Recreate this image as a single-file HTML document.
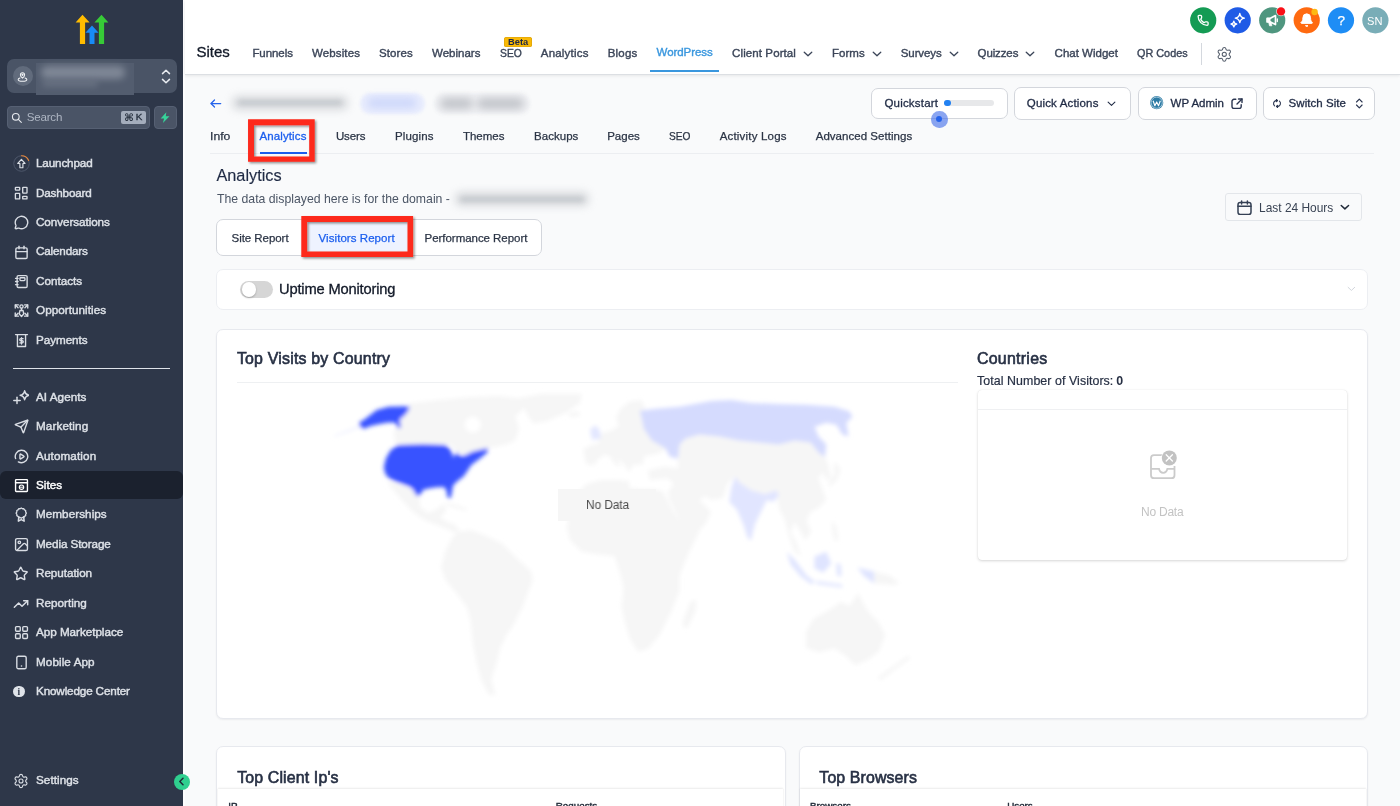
<!DOCTYPE html>
<html lang="en">
<head>
<meta charset="utf-8">
<title>Sites - WordPress Analytics</title>
<style>
*{box-sizing:border-box;margin:0;padding:0}
html,body{width:1400px;height:806px;overflow:hidden;background:#f9fafb;font-family:"Liberation Sans",sans-serif;}
.t{position:absolute;white-space:pre;}
.abs{position:absolute;}
#sidebar{position:absolute;left:0;top:0;width:183px;height:806px;background:#2e3749;}
#sidebar svg.ic{position:absolute;left:13.8px;width:15px;height:15px;fill:none;stroke:#d9dde4;stroke-width:2.2;stroke-linecap:round;stroke-linejoin:round;}
#header{position:absolute;left:185px;top:0;width:1215px;height:74.5px;background:#fff;border-bottom:1px solid #dcdfe3;box-shadow:0 1px 3px rgba(0,0,0,.08);}
.chev{position:absolute;fill:none;stroke:#3b4558;stroke-width:2.6;stroke-linecap:round;stroke-linejoin:round;}
.circ{position:absolute;top:7.2px;width:26.4px;height:26.4px;border-radius:50%;}
.circ svg{position:absolute;left:6.2px;top:6.2px;width:14px;height:14px;}
.btn{position:absolute;background:#fff;border:1px solid #d3d6dc;border-radius:7px;}
.card{position:absolute;background:#fff;border:1px solid #e7e9ee;border-radius:7px;box-shadow:0 1px 2px rgba(16,24,40,.06);}
.redbox{position:absolute;border:6px solid #f5261b;box-shadow:2px 2px 3px rgba(0,0,0,.35);}
</style>
</head>
<body>
<div id="page" style="position:absolute;left:0;top:0;width:1400px;height:806px;overflow:hidden;will-change:transform;">
<!-- ============ SIDEBAR ============ -->
<div id="sidebar">
<!-- logo -->
<svg class="abs" style="left:75px;top:14px;width:34px;height:31px" viewBox="0 0 34 31">
  <polygon points="7.5,0.8 14.6,8.4 10.1,8.4 10.1,30 4.9,30 4.9,8.4 0.6,8.4" fill="#ffbc00"/>
  <polygon points="17,11.6 23.6,18.8 19.5,18.8 19.5,30 14.5,30 14.5,18.8 10.4,18.8" fill="#188bf6"/>
  <polygon points="26.5,0.8 33.4,8.4 29.1,8.4 29.1,30 23.9,30 23.9,8.4 19.4,8.4" fill="#37ca37"/>
</svg>
<!-- account switcher -->
<div class="abs" style="left:6.6px;top:59px;width:170.4px;height:34px;border-radius:7px;background:#4a5466;"></div>
<div class="abs" style="left:12.6px;top:65.8px;width:20.6px;height:20.6px;border-radius:50%;background:#616b7c;"></div>
<svg class="abs" style="left:17.4px;top:70.6px;width:11px;height:11px;fill:none;stroke:#f1f3f6;stroke-width:2.2;stroke-linecap:round;stroke-linejoin:round" viewBox="0 0 24 24"><path d="M12 15.5c-2.6-2.3-4.6-4.6-4.600-7a4.600 4.600 0 0 1 9.200 0c0 2.400-2 4.700-4.600 7z"/><circle cx="12" cy="8.300" r="1.400"/><path d="M6.500 15.200C4 16 2.500 17.200 2.500 18.500 2.500 20.700 6.800 22.500 12 22.500s9.500-1.800 9.500-4c0-1.300-1.500-2.500-4-3.300"/></svg>
<!-- blurred account name -->
<div class="abs" style="left:36px;top:63px;width:98px;height:31.500px;background:#535d6f;filter:blur(.6px)"></div>
<div class="abs" style="left:41px;top:66px;width:84px;height:13px;border-radius:6px;background:#8a92a0;filter:blur(3.500px);opacity:.8"></div>
<div class="abs" style="left:42px;top:80px;width:56px;height:7px;border-radius:4px;background:#6d7686;filter:blur(3px);opacity:.8"></div>
<svg class="abs" style="left:160.5px;top:67.5px;width:10px;height:17px;fill:none;stroke:#e8ebf0;stroke-width:1.5;stroke-linecap:round;stroke-linejoin:round" viewBox="0 0 10 17"><path d="M1.500 5.600 5 2.200l3.500 3.400"/><path d="M1.500 11.400 5 14.800l3.500-3.400"/></svg>
<!-- search -->
<div class="abs" style="left:6.6px;top:106px;width:143px;height:23px;border-radius:4px;background:#4a5466;border:1px solid #566073;"></div>
<svg class="abs" style="left:10.800px;top:111.600px;width:11.500px;height:11.500px;fill:none;stroke:#e6e9ee;stroke-width:2.300;stroke-linecap:round" viewBox="0 0 24 24"><circle cx="10" cy="10" r="7"/><path d="m21.500 21.500-6.200-6.200"/></svg>
<span class="t" style="left:26.79px;top:109.00px;font-size:11.6px;line-height:15px;font-weight:400;color:#aeb6c3;letter-spacing:-0.224px;">Search</span>
<div class="abs" style="left:121px;top:111px;width:24.5px;height:13px;border-radius:2px;background:#a4adbc;"></div>
<span class="t" style="left:124.14px;top:111.00px;font-size:10.3px;line-height:13px;font-weight:700;color:#1f2937;letter-spacing:0.000px;font-family:'DejaVu Sans',sans-serif;">⌘</span>
<span class="t" style="left:135.80px;top:110.00px;font-size:9.8px;line-height:13px;font-weight:400;color:#1f2937;letter-spacing:0.000px;-webkit-text-stroke:.3px;">K</span>
<div class="abs" style="left:154px;top:106px;width:23px;height:23px;border-radius:4px;background:#4a5466;border:1px solid #566073;"></div>
<svg class="abs" style="left:160.400px;top:112.200px;width:10.200px;height:11.200px" viewBox="0 0 19 21"><path d="M11.800.4 1.200 12.200h6.400L5.400 20.600 17.800 8.200h-7z" fill="#36d399"/></svg>

<!-- nav items group 1 -->
<svg class="abs" style="left:12.6px;top:154.9px;width:17px;height:17px" viewBox="0 0 34 34"><circle cx="17" cy="17" r="15.500" fill="none" stroke="#566073" stroke-width="1.600"/><path d="M17 1.500a15.500 15.500 0 0 1 14.300 9.500" fill="none" stroke="#e9873a" stroke-width="2.200" stroke-linecap="round"/><path d="M16.800 8.600 24.100 17H19.800V25.400H13.800V17H9.500Z" fill="none" stroke="#dde1e7" stroke-width="2.300" stroke-linejoin="round"/></svg>
<span class="t" style="left:35.99px;top:155.00px;font-size:11.7px;line-height:15px;font-weight:400;color:#dde1e7;letter-spacing:-0.143px;-webkit-text-stroke:.42px;">Launchpad</span>
<svg class="ic" style="top:185.800px;left:14px;width:14.500px;height:14.500px;stroke-width:1.350" viewBox="0 0 14.500 14.500"><rect x="1.400" y="1.300" width="4.300" height="2.800" rx=".5"/><rect x="1.400" y="7.300" width="4.300" height="5.600" rx=".5"/><rect x="8.700" y="1.300" width="4.300" height="5.800" rx=".5"/><rect x="8.700" y="10.300" width="4.300" height="2.600" rx=".5"/></svg>
<span class="t" style="left:35.99px;top:185.00px;font-size:11.7px;line-height:15px;font-weight:400;color:#dde1e7;letter-spacing:-0.171px;-webkit-text-stroke:.42px;">Dashboard</span>
<svg class="ic" style="top:215.1px" viewBox="0 0 24 24"><path d="M2.992 16.342a2 2 0 0 1 .094 1.167l-1.065 3.290a1 1 0 0 0 1.236 1.168l3.413-.998a2 2 0 0 1 1.099.092 10 10 0 1 0-4.777-4.719"/></svg>
<span class="t" style="left:35.99px;top:214.00px;font-size:11.7px;line-height:15px;font-weight:400;color:#dde1e7;letter-spacing:-0.067px;-webkit-text-stroke:.42px;">Conversations</span>
<svg class="ic" style="top:244.5px" viewBox="0 0 24 24"><path d="M8 2v4"/><path d="M16 2v4"/><rect width="18" height="17" x="3" y="4.500" rx="2"/><path d="M3 10.500h18"/></svg>
<span class="t" style="left:35.99px;top:243.00px;font-size:11.7px;line-height:15px;font-weight:400;color:#dde1e7;letter-spacing:-0.170px;-webkit-text-stroke:.42px;">Calendars</span>
<svg class="ic" style="top:274px" viewBox="0 0 24 24"><rect width="16" height="19" x="5" y="2.500" rx="2"/><path d="M2.500 7h4"/><path d="M2.500 12h4"/><path d="M2.500 17h4"/><rect x="9.500" y="6" width="8" height="4.500" rx="1.200"/></svg>
<span class="t" style="left:35.99px;top:273.00px;font-size:11.7px;line-height:15px;font-weight:400;color:#dde1e7;letter-spacing:0.013px;-webkit-text-stroke:.42px;">Contacts</span>
<svg class="ic" style="top:303.4px" viewBox="0 0 24 24"><circle cx="12" cy="5.500" r="2.600"/><path d="M12 8.500v3.500"/><path d="M9.500 12h5l1 5.500-3.500 4-3.500-4z"/><path d="M2 8V3h5"/><path d="m2.300 3.300 4.200 4.200"/><path d="M22 8V3h-5"/><path d="m21.700 3.300-4.200 4.200"/><path d="M2 16v5h5"/><path d="m2.300 20.700 4.200-4.200"/><path d="M22 16v5h-5"/><path d="m21.700 20.700-4.200-4.200"/></svg>
<span class="t" style="left:35.99px;top:302.00px;font-size:11.7px;line-height:15px;font-weight:400;color:#dde1e7;letter-spacing:0.050px;-webkit-text-stroke:.42px;">Opportunities</span>
<svg class="ic" style="top:332.9px" viewBox="0 0 24 24"><path d="M2.500 2.500h19"/><path d="M5.500 2.500v19h13v-19"/><path d="M14.500 9h-3.600a1.700 1.700 0 0 0 0 3.400h2.200a1.700 1.700 0 0 1 0 3.400H9.500"/><path d="M12 7.500v10"/></svg>
<span class="t" style="left:35.99px;top:332.00px;font-size:11.7px;line-height:15px;font-weight:400;color:#dde1e7;letter-spacing:-0.050px;-webkit-text-stroke:.42px;">Payments</span>
<div class="abs" style="left:13.4px;top:367.6px;width:156.8px;height:1.3px;background:#dfe3e9;"></div>

<!-- nav items group 2 -->
<svg class="ic" style="top:389.6px;left:13px;width:16px;height:16px" viewBox="0 0 24 24"><path d="M17.400 1.200c.8 4.200 2.500 5.900 6.700 6.700-4.200.8-5.900 2.500-6.700 6.700-.8-4.200-2.500-5.900-6.700-6.700 4.200-.8 5.900-2.500 6.700-6.700z"/><path d="M6 10.800v9.600"/><path d="M1.200 15.600h9.600"/></svg>
<span class="t" style="left:35.99px;top:389.00px;font-size:11.7px;line-height:15px;font-weight:400;color:#dde1e7;letter-spacing:0.048px;-webkit-text-stroke:.42px;">AI Agents</span>
<svg class="ic" style="top:419.1px" viewBox="0 0 24 24"><path d="M14.536 21.686a.5.5 0 0 0 .937-.024l6.500-19a.496.496 0 0 0-.635-.635l-19 6.500a.5.5 0 0 0-.024.937l7.930 3.180a2 2 0 0 1 1.112 1.110z"/><path d="m21.854 2.147-10.940 10.939"/></svg>
<span class="t" style="left:35.99px;top:418.00px;font-size:11.7px;line-height:15px;font-weight:400;color:#dde1e7;letter-spacing:0.111px;-webkit-text-stroke:.42px;">Marketing</span>
<svg class="ic" style="top:448.5px" viewBox="0 0 24 24"><path d="M2.600 15.400A10 10 0 1 1 7 20.660"/><path d="M9.500 8.800a.8.800 0 0 1 1.200-.7l5 3.200a.8.800 0 0 1 0 1.400l-5 3.200a.8.800 0 0 1-1.200-.7z"/></svg>
<span class="t" style="left:35.99px;top:448.00px;font-size:11.7px;line-height:15px;font-weight:400;color:#dde1e7;letter-spacing:0.122px;-webkit-text-stroke:.42px;">Automation</span>
<div class="abs" style="left:0;top:470.6px;width:183px;height:28.8px;background:#1b212e;border-radius:6px;"></div>
<svg class="ic" style="top:478px;stroke:#fff" viewBox="0 0 24 24"><rect x="2.500" y="2.500" width="19" height="19" rx="1"/><path d="M2.500 7.500h19" stroke-width="2.400"/><circle cx="12" cy="14.700" r="3.500" stroke-width="1.800"/><path d="M8.500 14.700h7" stroke-width="1.500"/></svg>
<span class="t" style="left:35.99px;top:477.00px;font-size:11.7px;line-height:15px;font-weight:400;color:#ffffff;letter-spacing:0.009px;-webkit-text-stroke:.42px;">Sites</span>
<svg class="ic" style="top:506.2px;left:13.2px;width:16.5px;height:16.5px" viewBox="0 0 24 24"><path d="M8.500 15.500 7.800 22l4.200-2.200 4.200 2.200-.7-6.500"/><path d="M12 2.200l2 1.300 2.400-.1 1.100 2.100 2.100 1.100-.1 2.400 1.300 2-1.300 2 .1 2.400-2.100 1.100-1.100 2.100-2.400-.1-2 1.300-2-1.300-2.400.1-1.100-2.100-2.100-1.100.1-2.400-1.300-2 1.300-2-.1-2.400 2.100-1.100 1.100-2.100 2.400.1z" transform="translate(1.800 1) scale(.85)"/></svg>
<span class="t" style="left:35.99px;top:506.00px;font-size:11.7px;line-height:15px;font-weight:400;color:#dde1e7;letter-spacing:0.056px;-webkit-text-stroke:.42px;">Memberships</span>
<svg class="ic" style="top:536.9px" viewBox="0 0 24 24"><rect width="19" height="19" x="2.500" y="2.500" rx="2.500"/><circle cx="8.500" cy="8.500" r="2"/><path d="m21.500 14.500-3.586-3.586a2 2 0 0 0-2.828 0L5 21"/></svg>
<span class="t" style="left:35.99px;top:536.00px;font-size:11.7px;line-height:15px;font-weight:400;color:#dde1e7;letter-spacing:-0.100px;-webkit-text-stroke:.42px;">Media Storage</span>
<svg class="ic" style="top:566.3px;left:13.4px;width:15.500px;height:15.500px" viewBox="0 0 24 24"><path d="M11.525 2.295a.53.53 0 0 1 .95 0l2.310 4.679a2.123 2.123 0 0 0 1.595 1.160l5.166.756a.53.53 0 0 1 .294.904l-3.736 3.638a2.123 2.123 0 0 0-.611 1.878l.882 5.140a.53.53 0 0 1-.771.560l-4.618-2.428a2.122 2.122 0 0 0-1.973 0L6.396 21.010a.53.53 0 0 1-.770-.560l.881-5.139a2.122 2.122 0 0 0-.611-1.879L2.160 9.795a.53.53 0 0 1 .294-.906l5.165-.755a2.122 2.122 0 0 0 1.597-1.160z"/></svg>
<span class="t" style="left:35.99px;top:565.00px;font-size:11.7px;line-height:15px;font-weight:400;color:#dde1e7;letter-spacing:-0.048px;-webkit-text-stroke:.42px;">Reputation</span>
<svg class="ic" style="top:595.8px;left:13px;width:16px;height:16px" viewBox="0 0 24 24"><path d="M16 7h6v6"/><path d="m22 7-8.500 8.500-5-5L2 17"/></svg>
<span class="t" style="left:35.99px;top:595.00px;font-size:11.7px;line-height:15px;font-weight:400;color:#dde1e7;letter-spacing:0.016px;-webkit-text-stroke:.42px;">Reporting</span>
<svg class="ic" style="top:625.3px" viewBox="0 0 24 24"><rect width="7.500" height="7.500" x="2.500" y="2.500" rx="1.500"/><rect width="7.500" height="7.500" x="14" y="2.500" rx="1.500"/><rect width="7.500" height="7.500" x="14" y="14" rx="1.500"/><rect width="7.500" height="7.500" x="2.500" y="14" rx="1.500"/></svg>
<span class="t" style="left:35.99px;top:624.00px;font-size:11.7px;line-height:15px;font-weight:400;color:#dde1e7;letter-spacing:-0.035px;-webkit-text-stroke:.42px;">App Marketplace</span>
<svg class="ic" style="top:654.7px" viewBox="0 0 24 24"><rect width="15" height="20" x="4.500" y="2" rx="2.500"/><path d="M12 17.500h.01" stroke-width="2.600"/></svg>
<span class="t" style="left:35.99px;top:654.00px;font-size:11.7px;line-height:15px;font-weight:400;color:#dde1e7;letter-spacing:0.088px;-webkit-text-stroke:.42px;">Mobile App</span>
<div class="abs" style="left:13px;top:685.6px;width:11.800px;height:11.800px;border-radius:50%;background:#dfe3e9;"></div>
<span class="t" style="left:17.60px;top:686.00px;font-size:9.5px;line-height:12px;font-weight:700;color:#2e3749;letter-spacing:0.000px;font-family:'Liberation Serif',serif;">i</span>
<span class="t" style="left:35.99px;top:683.00px;font-size:11.7px;line-height:15px;font-weight:400;color:#dde1e7;letter-spacing:-0.144px;-webkit-text-stroke:.42px;">Knowledge Center</span>
<svg class="ic" style="top:772.700px;left:13px;width:16px;height:16px;stroke-width:1.700" viewBox="0 0 24 24"><path d="M9.671 4.136a2.340 2.340 0 0 1 4.659 0 2.340 2.340 0 0 0 3.319 1.915 2.340 2.340 0 0 1 2.330 4.033 2.340 2.340 0 0 0 0 3.831 2.340 2.340 0 0 1-2.330 4.033 2.340 2.340 0 0 0-3.319 1.915 2.340 2.340 0 0 1-4.659 0 2.340 2.340 0 0 0-3.320-1.915 2.340 2.340 0 0 1-2.330-4.033 2.340 2.340 0 0 0 0-3.831A2.340 2.340 0 0 1 6.350 6.051a2.340 2.340 0 0 0 3.319-1.915"/><circle cx="12" cy="12" r="3"/></svg>
<span class="t" style="left:35.99px;top:772.00px;font-size:11.7px;line-height:15px;font-weight:400;color:#dde1e7;letter-spacing:0.055px;-webkit-text-stroke:.42px;">Settings</span>

</div>
<div class="abs" style="left:183px;top:0;width:2px;height:806px;background:#fdfdfe;z-index:0"></div>
<!-- ============ HEADER ============ -->
<div id="header"></div>
<span class="t" style="left:196.47px;top:42.00px;font-size:15.0px;line-height:20px;font-weight:400;color:#111827;letter-spacing:-0.002px;-webkit-text-stroke:.3px;">Sites</span>
<span class="t" style="left:252.40px;top:46.00px;font-size:11.5px;line-height:15px;font-weight:400;color:#3b4558;letter-spacing:-0.069px;-webkit-text-stroke:.38px;">Funnels</span>
<span class="t" style="left:312.10px;top:46.00px;font-size:11.5px;line-height:15px;font-weight:400;color:#3b4558;letter-spacing:0.102px;-webkit-text-stroke:.38px;">Websites</span>
<span class="t" style="left:379.10px;top:46.00px;font-size:11.5px;line-height:15px;font-weight:400;color:#3b4558;letter-spacing:0.071px;-webkit-text-stroke:.38px;">Stores</span>
<span class="t" style="left:432.10px;top:46.00px;font-size:11.5px;line-height:15px;font-weight:400;color:#3b4558;letter-spacing:-0.010px;-webkit-text-stroke:.38px;">Webinars</span>
<div class="abs" style="left:504px;top:37px;width:28px;height:10.300px;border-radius:2.500px;background:#f9b906;box-shadow:inset 0 0 0 .6px #d9a00a"></div>
<span class="t" style="left:507.96px;top:35.00px;font-size:9.8px;line-height:13px;font-weight:700;color:#1d2748;letter-spacing:0.000px;transform:scaleX(0.9499);transform-origin:0 50%;">Beta</span>
<span class="t" style="left:499.60px;top:46.00px;font-size:11.5px;line-height:15px;font-weight:400;color:#3b4558;letter-spacing:0.000px;-webkit-text-stroke:.38px;transform:scaleX(0.8974);transform-origin:0 50%;">SEO</span>
<span class="t" style="left:540.80px;top:46.00px;font-size:11.5px;line-height:15px;font-weight:400;color:#3b4558;letter-spacing:0.197px;-webkit-text-stroke:.38px;">Analytics</span>
<span class="t" style="left:607.80px;top:46.00px;font-size:11.5px;line-height:15px;font-weight:400;color:#3b4558;letter-spacing:0.156px;-webkit-text-stroke:.38px;">Blogs</span>
<span class="t" style="left:656.60px;top:45.00px;font-size:11.5px;line-height:15px;font-weight:400;color:#3a97de;letter-spacing:-0.071px;-webkit-text-stroke:.38px;">WordPress</span>
<div class="abs" style="left:650px;top:69.8px;width:69.300px;height:2px;background:#3a97de;"></div>
<span class="t" style="left:732.10px;top:46.00px;font-size:11.5px;line-height:15px;font-weight:400;color:#3b4558;letter-spacing:0.097px;-webkit-text-stroke:.38px;">Client Portal</span>
<svg class="chev" style="left:802.5px;top:50.5px;width:10px;height:6px" viewBox="0 0 20 12"><path d="m2.500 2.500 7.500 7 7.500-7"/></svg>
<span class="t" style="left:832.10px;top:46.00px;font-size:11.5px;line-height:15px;font-weight:400;color:#3b4558;letter-spacing:0.003px;-webkit-text-stroke:.38px;">Forms</span>
<svg class="chev" style="left:871.5px;top:50.5px;width:10px;height:6px" viewBox="0 0 20 12"><path d="m2.500 2.500 7.500 7 7.500-7"/></svg>
<span class="t" style="left:900.80px;top:46.00px;font-size:11.5px;line-height:15px;font-weight:400;color:#3b4558;letter-spacing:-0.107px;-webkit-text-stroke:.38px;">Surveys</span>
<svg class="chev" style="left:948.5px;top:50.5px;width:10px;height:6px" viewBox="0 0 20 12"><path d="m2.500 2.500 7.500 7 7.500-7"/></svg>
<span class="t" style="left:977.60px;top:46.00px;font-size:11.5px;line-height:15px;font-weight:400;color:#3b4558;letter-spacing:-0.124px;-webkit-text-stroke:.38px;">Quizzes</span>
<svg class="chev" style="left:1025.3px;top:50.5px;width:10px;height:6px" viewBox="0 0 20 12"><path d="m2.500 2.500 7.500 7 7.500-7"/></svg>
<span class="t" style="left:1054.60px;top:46.00px;font-size:11.5px;line-height:15px;font-weight:400;color:#3b4558;letter-spacing:0.002px;-webkit-text-stroke:.38px;">Chat Widget</span>
<span class="t" style="left:1137.20px;top:46.00px;font-size:11.5px;line-height:15px;font-weight:400;color:#3b4558;letter-spacing:0.000px;-webkit-text-stroke:.38px;transform:scaleX(0.9426);transform-origin:0 50%;">QR Codes</span>
<div class="abs" style="left:1201.2px;top:42.6px;width:1.200px;height:22.800px;background:#d4d8de;"></div>
<svg class="abs" style="left:1215.500px;top:46.200px;width:16.600px;height:16.600px;fill:none;stroke:#555e6c;stroke-width:1.500;stroke-linecap:round;stroke-linejoin:round" viewBox="0 0 24 24"><path d="M9.671 4.136a2.340 2.340 0 0 1 4.659 0 2.340 2.340 0 0 0 3.319 1.915 2.340 2.340 0 0 1 2.330 4.033 2.340 2.340 0 0 0 0 3.831 2.340 2.340 0 0 1-2.330 4.033 2.340 2.340 0 0 0-3.319 1.915 2.340 2.340 0 0 1-4.659 0 2.340 2.340 0 0 0-3.320-1.915 2.340 2.340 0 0 1-2.330-4.033 2.340 2.340 0 0 0 0-3.831A2.340 2.340 0 0 1 6.350 6.051a2.340 2.340 0 0 0 3.319-1.915"/><circle cx="12" cy="12" r="3"/></svg>

<!-- round action buttons -->
<svg class="abs" style="left:1180px;top:0;width:220px;height:40px" viewBox="0 0 220 40">
  <circle cx="23.200" cy="20.300" r="13.100" fill="#149b54"/>
  <g transform="translate(17.100 14.300) scale(.5)" fill="none" stroke="#fff" stroke-width="2.600" stroke-linecap="round" stroke-linejoin="round"><path d="M13.832 16.568a1 1 0 0 0 1.213-.303l.355-.465A2 2 0 0 1 17 15h3a2 2 0 0 1 2 2v3a2 2 0 0 1-2 2A18 18 0 0 1 2 4a2 2 0 0 1 2-2h3a2 2 0 0 1 2 2v3a2 2 0 0 1-.8 1.600l-.468.351a1 1 0 0 0-.292 1.233 14 14 0 0 0 6.392 6.384"/></g>
  <circle cx="57.700" cy="20.300" r="13.100" fill="#1f5be6"/>
  <g transform="translate(49.300 11.800) scale(.7)" fill="none" stroke="#fff" stroke-width="2" stroke-linecap="round" stroke-linejoin="round"><path d="M15 2.500c.7 4.300 2.200 5.800 6.500 6.500-4.300.7-5.800 2.200-6.500 6.500-.7-4.300-2.200-5.800-6.500-6.500 4.300-.7 5.800-2.200 6.500-6.500z"/><path d="M6.500 13.500c.4 2.500 1.500 3.600 4 4-2.500.4-3.600 1.500-4 4-.4-2.500-1.500-3.600-4-4 2.500-.4 3.600-1.500 4-4z"/></g>
  <circle cx="92.200" cy="20.300" r="13.100" fill="#4f967f"/>
  <g transform="translate(85 13.200) scale(.6)" fill="#fff" stroke="#fff" stroke-width="1.200" stroke-linejoin="round"><path d="M3.500 8.500h5.500l8.500-4.500v15l-8.500-4.500H3.500z" fill="none" stroke-width="2.800"/><path d="M3.500 8.500h5v6h-5z"/><path d="M6 14.500h4l1.500 6.500H7.500z"/><path d="M20.500 9.500v4.500" stroke-width="2.200" stroke-linecap="round"/></g>
  <circle cx="101" cy="11.400" r="4.900" fill="#fff" opacity=".75"/>
  <circle cx="101" cy="11.400" r="4.200" fill="#fa0f17"/>
  <circle cx="126.700" cy="20.300" r="13.100" fill="#ff6a10"/>
  <g transform="translate(119.100 12.600) scale(.635)" fill="#fff" stroke="#fff" stroke-width="1.500" stroke-linejoin="round" stroke-linecap="round"><path d="M3.262 15.326A1 1 0 0 0 4 17h16a1 1 0 0 0 .74-1.673C19.410 13.956 18 12.499 18 8A6 6 0 0 0 6 8c0 4.499-1.411 5.956-2.738 7.326"/><path d="M10.300 21a2 2 0 0 0 3.400 0z"/></g>
  <circle cx="134.600" cy="12" r="3.200" fill="#fdb913"/>
  <circle cx="161" cy="20.300" r="13.100" fill="#1e8df5"/>
  <circle cx="195.400" cy="20.300" r="13.100" fill="#79adb7"/>
</svg>
<span class="t" style="left:1337.50px;top:12.00px;font-size:13.5px;line-height:18px;font-weight:400;color:#ffffff;letter-spacing:0.000px;-webkit-text-stroke:.25px;">?</span>
<span class="t" style="left:1367.20px;top:14.00px;font-size:11.5px;line-height:15px;font-weight:400;color:#ffffff;letter-spacing:0.000px;transform:scaleX(0.9638);transform-origin:0 50%;">SN</span>

<!-- ============ SUBHEADER ============ -->
<svg class="abs" style="left:210.300px;top:98.800px;width:11.500px;height:9px;fill:none;stroke:#2563eb;stroke-width:1.250;stroke-linecap:round;stroke-linejoin:round" viewBox="0 0 11.500 9"><path d="M4.500 1 1 4.500 4.500 8"/><path d="M1.200 4.500h9.500"/></svg>
<!-- blurred site name + pills -->
<div class="abs" style="left:232px;top:95.500px;width:116px;height:14px;border-radius:6px;background:#9ea3ab;filter:blur(4px);opacity:.36"></div>
<div class="abs" style="left:238px;top:100px;width:104px;height:5px;border-radius:3px;background:#6f7580;filter:blur(2.500px);opacity:.2"></div>
<div class="abs" style="left:360px;top:92.500px;width:65px;height:21px;border-radius:10.500px;background:#e9edfd;filter:blur(1.800px)"></div>
<div class="abs" style="left:367px;top:98px;width:50px;height:10px;border-radius:5px;background:#b4c3f8;filter:blur(4px);opacity:.55;"></div>
<div class="abs" style="left:434px;top:92.500px;width:96px;height:21px;border-radius:10.500px;background:#f0f1f4;filter:blur(1.800px)"></div>
<div class="abs" style="left:440px;top:97.500px;width:33px;height:11px;border-radius:5px;background:#80858e;filter:blur(4px);opacity:.42"></div>
<div class="abs" style="left:477px;top:97.500px;width:47px;height:11px;border-radius:5px;background:#80858e;filter:blur(4px);opacity:.42"></div>

<!-- buttons -->
<div class="btn" style="left:871px;top:88px;width:136.600px;height:30.500px;"></div>
<span class="t" style="left:884.40px;top:96.00px;font-size:11.5px;line-height:15px;font-weight:400;color:#1f2a44;letter-spacing:0.204px;-webkit-text-stroke:.3px;">Quickstart</span>
<div class="abs" style="left:944.400px;top:100.300px;width:49.200px;height:5.800px;border-radius:3px;background:#e7e8ea;"></div>
<div class="abs" style="left:944.400px;top:100.300px;width:6.800px;height:5.800px;border-radius:3px;background:#2281f2;"></div>
<div class="abs" style="left:931.200px;top:111.200px;width:16.400px;height:16.400px;border-radius:50%;background:rgba(66,110,232,.62);"></div>
<div class="abs" style="left:936.400px;top:116.400px;width:6px;height:6px;border-radius:50%;background:#2563eb;"></div>
<div class="btn" style="left:1014.400px;top:87px;width:116.400px;height:32.500px;"></div>
<span class="t" style="left:1026.80px;top:96.00px;font-size:11.5px;line-height:15px;font-weight:400;color:#1f2a44;letter-spacing:0.161px;-webkit-text-stroke:.3px;">Quick Actions</span>
<svg class="chev" style="left:1107px;top:100.500px;width:9px;height:5.500px;stroke:#1f2a44;stroke-width:2.400" viewBox="0 0 20 12"><path d="m2.500 2.500 7.500 7 7.500-7"/></svg>
<div class="btn" style="left:1137.600px;top:87px;width:119px;height:32.500px;"></div>
<svg class="abs" style="left:1150.300px;top:96.400px;width:13.400px;height:13.400px" viewBox="0 0 26 26"><circle cx="13" cy="13" r="12.800" fill="#2c7ba5"/><circle cx="13" cy="13" r="10.900" fill="none" stroke="#fff" stroke-width="1.100"/><path d="M6 9.300 9.500 18.800 13 11.500l3.500 7.300L20 9.300" fill="none" stroke="#fff" stroke-width="2.200" stroke-linejoin="round"/></svg>
<span class="t" style="left:1170.60px;top:96.00px;font-size:11.5px;line-height:15px;font-weight:400;color:#1f2a44;letter-spacing:-0.011px;-webkit-text-stroke:.3px;">WP Admin</span>
<svg class="abs" style="left:1231px;top:97.600px;width:12px;height:11.500px;fill:none;stroke:#2a3550;stroke-width:1.400;stroke-linecap:round;stroke-linejoin:round" viewBox="0 0 12 11.500"><path d="M7.500 1H11v3.500"/><path d="M11 1 6 6"/><path d="M4.800 1.300H3A2 2 0 0 0 1 3.300V8.500a2 2 0 0 0 2 2h5.200a2 2 0 0 0 2-2V6.800"/></svg>
<div class="btn" style="left:1263.400px;top:87px;width:111.500px;height:32.500px;"></div>
<svg class="abs" style="left:1272px;top:98.700px;width:10px;height:9px;fill:none;stroke:#2a3550;stroke-width:1.100;stroke-linecap:round;stroke-linejoin:round" viewBox="0 0 10 9"><path d="M2.600 6.800A3 3 0 0 1 3.800 1.600h1.600"/><path d="M4.400.5l1.100 1.100-1.100 1.100"/><path d="M7.400 2.200A3 3 0 0 1 6.200 7.400H4.600"/><path d="M5.600 8.500 4.500 7.400l1.100-1.100"/></svg>
<span class="t" style="left:1288.60px;top:96.00px;font-size:11.5px;line-height:15px;font-weight:400;color:#1f2a44;letter-spacing:0.051px;-webkit-text-stroke:.3px;">Switch Site</span>
<svg class="abs" style="left:1354.500px;top:97.800px;width:8.600px;height:11px;fill:none;stroke:#2a3550;stroke-width:1.150;stroke-linecap:round;stroke-linejoin:round" viewBox="0 0 8.600 11"><path d="M1.500 4 4.300 1.200 7.100 4"/><path d="M1.500 7 4.300 9.800 7.100 7"/></svg>

<!-- tabs -->
<div class="abs" style="left:210px;top:152.600px;width:1164px;height:1px;background:#eceef1;"></div>
<span class="t" style="left:209.60px;top:129.00px;font-size:11.5px;line-height:15px;font-weight:400;color:#2b3445;letter-spacing:0.000px;-webkit-text-stroke:.25px;transform:scaleX(1.0582);transform-origin:0 50%;">Info</span>
<span class="t" style="left:259.40px;top:129.00px;font-size:11.5px;line-height:15px;font-weight:400;color:#1a5eee;letter-spacing:0.122px;-webkit-text-stroke:.3px;">Analytics</span>
<div class="abs" style="left:259.500px;top:152px;width:47.500px;height:2px;background:#1a5eee;"></div>
<span class="t" style="left:335.90px;top:129.00px;font-size:11.5px;line-height:15px;font-weight:400;color:#2b3445;letter-spacing:-0.132px;-webkit-text-stroke:.25px;">Users</span>
<span class="t" style="left:395.10px;top:129.00px;font-size:11.5px;line-height:15px;font-weight:400;color:#2b3445;letter-spacing:0.098px;-webkit-text-stroke:.25px;">Plugins</span>
<span class="t" style="left:462.90px;top:129.00px;font-size:11.5px;line-height:15px;font-weight:400;color:#2b3445;letter-spacing:-0.008px;-webkit-text-stroke:.25px;">Themes</span>
<span class="t" style="left:534.00px;top:129.00px;font-size:11.5px;line-height:15px;font-weight:400;color:#2b3445;letter-spacing:0.033px;-webkit-text-stroke:.25px;">Backups</span>
<span class="t" style="left:607.20px;top:129.00px;font-size:11.5px;line-height:15px;font-weight:400;color:#2b3445;letter-spacing:-0.001px;-webkit-text-stroke:.25px;">Pages</span>
<span class="t" style="left:669.00px;top:129.00px;font-size:11.5px;line-height:15px;font-weight:400;color:#2b3445;letter-spacing:0.000px;-webkit-text-stroke:.25px;transform:scaleX(0.8851);transform-origin:0 50%;">SEO</span>
<span class="t" style="left:719.70px;top:129.00px;font-size:11.5px;line-height:15px;font-weight:400;color:#2b3445;letter-spacing:0.187px;-webkit-text-stroke:.25px;">Activity Logs</span>
<span class="t" style="left:815.70px;top:129.00px;font-size:11.5px;line-height:15px;font-weight:400;color:#2b3445;letter-spacing:0.037px;-webkit-text-stroke:.25px;">Advanced Settings</span>
<svg class="abs" style="left:240px;top:112px;width:90px;height:64px;overflow:visible" viewBox="0 0 90 64"><defs><filter id="rs" x="-20%" y="-20%" width="150%" height="150%"><feDropShadow dx="1.500" dy="1.500" stdDeviation=".9" flood-color="#000" flood-opacity=".42"/></filter></defs><path filter="url(#rs)" fill="#fd291c" fill-rule="evenodd" d="M8.040 7.200H74.700V49.700H8.040zM14 13.250H69.200V44.500H14z"/></svg>

<!-- ============ CONTENT ============ -->
<span class="t" style="left:216.43px;top:165.00px;font-size:16.3px;line-height:21px;font-weight:400;color:#1f2a44;letter-spacing:-0.002px;-webkit-text-stroke:.15px;">Analytics</span>
<span class="t" style="left:216.54px;top:190.00px;font-size:13.0px;line-height:17px;font-weight:400;color:#4b5565;letter-spacing:0.000px;transform:scaleX(0.9424);transform-origin:0 50%;">The data displayed here is for the domain -</span>
<div class="abs" style="left:455px;top:191.500px;width:134px;height:14px;border-radius:6px;background:#9ea3ab;filter:blur(4px);opacity:.36"></div><div class="abs" style="left:460px;top:196.500px;width:124px;height:5px;border-radius:3px;background:#6f7580;filter:blur(2.500px);opacity:.2"></div>

<!-- date picker -->
<div class="abs" style="left:1224.900px;top:193.200px;width:136.700px;height:27.600px;border:1px solid #e3e6ea;border-radius:3px;background:#f9fafb;"></div>
<svg class="abs" style="left:1237px;top:199.800px;width:15px;height:15.500px;fill:none;stroke:#344054;stroke-width:1.500;stroke-linecap:round;stroke-linejoin:round" viewBox="0 0 15 15.500"><rect x="1" y="2.500" width="13" height="12" rx="2.200"/><path d="M1 6.300h13"/><path d="M4.600.900v3"/><path d="M10.400.900v3"/></svg>
<span class="t" style="left:1259.25px;top:199.00px;font-size:13.0px;line-height:17px;font-weight:400;color:#3a4454;letter-spacing:0.000px;transform:scaleX(0.9181);transform-origin:0 50%;">Last 24 Hours</span>
<svg class="chev" style="left:1340.200px;top:203.900px;width:9.800px;height:6.400px;stroke:#1f2937;stroke-width:3" viewBox="0 0 20 12"><path d="m2.500 2.500 7.500 7 7.500-7"/></svg>

<!-- report tabs -->
<div class="abs" style="left:216px;top:219px;width:326.200px;height:36.800px;border:1px solid #d3d6dc;border-radius:7px;background:#fff;"></div>
<span class="t" style="left:231.60px;top:231.00px;font-size:11.5px;line-height:15px;font-weight:400;color:#2b3445;letter-spacing:-0.053px;-webkit-text-stroke:.25px;">Site Report</span>
<div class="abs" style="left:307px;top:222px;width:101px;height:30px;background:#eef3ff;"></div>
<span class="t" style="left:318.60px;top:231.00px;font-size:11.5px;line-height:15px;font-weight:400;color:#1a5eee;letter-spacing:0.056px;-webkit-text-stroke:.25px;">Visitors Report</span>
<span class="t" style="left:424.60px;top:231.00px;font-size:11.5px;line-height:15px;font-weight:400;color:#2b3445;letter-spacing:-0.044px;-webkit-text-stroke:.25px;">Performance Report</span>
<svg class="abs" style="left:295px;top:210px;width:130px;height:60px;overflow:visible" viewBox="0 0 130 60"><path filter="url(#rs)" fill="#fd291c" fill-rule="evenodd" d="M6.300 6H118.100V46.900H6.300zM12.100 11.900H112.500V41.600H12.100z"/></svg>

<!-- uptime card -->
<div class="card" style="left:216px;top:268.500px;width:1151.600px;height:41.400px;box-shadow:none;border-color:#eceef2"></div>
<div class="abs" style="left:240px;top:280.500px;width:33px;height:17.500px;border-radius:9px;background:#d6d6d6;"></div>
<div class="abs" style="left:241.500px;top:282px;width:14.500px;height:14.500px;border-radius:50%;background:#fff;box-shadow:0 1px 2px rgba(0,0,0,.25);"></div>
<span class="t" style="left:278.99px;top:280.00px;font-size:14.7px;line-height:19px;font-weight:400;color:#111827;letter-spacing:-0.166px;-webkit-text-stroke:.3px;">Uptime Monitoring</span>
<svg class="chev" style="left:1346.600px;top:286.300px;width:8.800px;height:5.800px;stroke:#d0d4db;stroke-width:2.200" viewBox="0 0 20 12"><path d="m2.500 2.500 7.500 7 7.500-7"/></svg>

<!-- map card -->
<div class="card" style="left:216px;top:329px;width:1151.800px;height:390px;"></div>
<span class="t" style="left:236.94px;top:348.00px;font-size:15.9px;line-height:21px;font-weight:400;color:#273044;letter-spacing:0.202px;-webkit-text-stroke:.62px;">Top Visits by Country</span>
<div class="abs" style="left:237px;top:382.200px;width:720.500px;height:1px;background:#eef0f2;"></div>
<svg class="abs" style="left:237px;top:384px;width:720px;height:335px" viewBox="0 0 720 335"><defs><filter id="mb" x="-5%" y="-5%" width="110%" height="110%"><feGaussianBlur stdDeviation="2"/></filter></defs><g filter="url(#mb)">
<polygon fill="#f6f6f6" points="162.4,26.8 174.3,18.9 202.1,16.1 233.9,12.9 261.6,12.1 289.4,14.9 286.3,24.8 278.3,32.8 282.3,44.7 278.3,56.6 269.6,60.5 257.7,62.9 250.5,63.7 241.8,68.5 230.7,72.5 220.0,68.5 214.0,60.5 158.4,60.5 156.8,48.6 160.8,38.7"/>
<polygon fill="#f6f6f6" points="283.5,13.7 305.3,9.7 345.0,9.7 343.0,18.9 329.1,28.8 309.3,37.5 296.2,39.5 291.4,32.8 286.3,22.8"/>
<polygon fill="#f6f6f6" points="149.7,97.5 164.4,101.0 175.1,105.0 182.2,113.3 183.4,123.3 191.0,128.8 200.5,124.9 206.9,119.3 209.2,127.2 203.3,133.6 210.8,138.0 218.0,140.7 222.7,146.3 218.0,148.7 209.2,144.7 198.9,140.7 187.0,136.0 175.1,127.2 164.4,116.1 156.4,106.2"/>
<polygon fill="#f6f6f6" points="209.2,118.5 221.9,121.7 230.7,124.9 229.9,126.8 220.0,124.5 209.2,120.9"/>
<polygon fill="#f6f6f6" points="220.0,147.9 233.9,145.9 249.7,151.9 265.6,159.8 281.5,175.7 294.2,187.6 295.8,196.3 291.4,207.4 285.5,223.3 277.5,239.2 269.6,251.1 263.6,263.0 259.7,278.9 254.5,294.8 258.5,311.4 251.7,310.6 243.8,294.8 239.8,278.9 235.8,259.0 233.9,239.2 229.9,223.3 218.0,207.4 208.0,195.5 204.1,183.6 208.0,167.7 214.0,155.8"/>
<polygon fill="#f6f6f6" points="441.0,74.8 442.5,60.5 448.5,54.6 462.4,50.6 482.2,52.6 502.1,56.6 521.9,58.6 541.8,60.5 557.7,56.6 573.6,58.6 581.5,68.5 587.8,73.3 591.4,80.4 594.2,94.7 589.4,96.3 585.5,88.3 581.5,94.3 589.4,116.1 581.5,124.1 573.6,128.0 569.6,136.0 574.3,147.9 568.0,156.6 563.6,147.9 557.7,138.0 553.7,147.9 560.1,159.8 564.0,172.5 557.7,167.7 551.7,151.9 547.7,136.0 541.8,124.1 539.8,106.2 527.9,110.2 514.0,106.2 502.1,98.3 498.1,92.3 490.2,100.2 486.2,114.1 474.3,116.1 468.4,112.2 462.4,116.1 474.3,128.0 468.4,139.9 454.5,154.2 448.5,150.3 438.6,128.0 432.6,116.1 430.6,108.2 436.6,100.2 430.6,94.3 412.8,96.3 410.8,86.4 426.7,82.4 441.0,84.4"/>
<polygon fill="#f6f6f6" points="599.4,78.4 603.7,86.4 599.8,96.3 593.4,102.6 591.0,100.2 597.4,90.3 597.0,80.4"/>
<polygon fill="#f6f6f6" points="595.4,136.0 599.8,143.9 601.7,156.6 597.4,156.6 595.0,145.9"/>
<polygon fill="#f6f6f6" points="568.8,247.9 576.7,234.4 592.6,225.7 603.7,217.8 612.5,221.7 621.2,209.0 629.9,225.7 641.8,238.4 648.2,251.1 641.8,267.8 629.9,276.5 618.0,281.3 609.3,272.5 597.4,264.6 581.5,268.6 568.8,263.8"/>
<polygon fill="#f6f6f6" points="641.0,293.2 670.8,271.7 673.6,274.1 643.4,296.4"/>
<polygon fill="#f6f6f6" points="446.5,235.2 453.7,217.4 459.2,215.4 458.4,227.3 450.5,244.0 445.7,243.2"/>
<polygon fill="#f6f6f6" points="637.1,187.6 652.9,191.6 662.9,199.5 656.9,201.1 637.1,199.5"/>
<polygon fill="#f6f6f6" points="347.7,74.0 346.2,65.0 355.1,60.6 362.6,59.1 359.6,51.6 367.0,48.6 376.0,45.7 381.9,41.2 378.9,33.8 383.4,24.8 392.3,17.4 404.3,15.9 407.8,23.3 405.7,36.7 410.2,45.7 422.1,51.6 428.1,60.6 431.6,71.3 428.1,65.0 422.1,69.5 407.2,72.5 406.0,80.2 395.3,81.4 392.3,89.1 387.9,81.4 380.4,74.0 384.0,83.2 377.4,80.2 373.0,72.5 367.0,71.0 361.1,75.4 356.6,81.4 349.2,80.2"/>
<polygon fill="#f6f6f6" points="347.7,100.8 362.6,96.3 378.9,95.7 392.3,96.9 392.3,103.7 404.3,105.2 416.2,105.2 425.1,106.7 429.6,114.2 435.5,126.1 443.0,138.0 448.9,145.4 462.6,146.9 450.5,171.7 442.5,191.6 442.5,207.4 434.6,227.3 422.7,251.1 410.8,265.0 400.9,267.8 392.9,255.1 387.0,235.2 383.0,215.4 384.9,221.4 386.4,203.5 381.9,185.6 377.4,172.2 362.6,170.7 344.7,167.8 332.8,155.9 329.8,143.9 332.8,129.1 338.7,114.2"/>
<polygon fill="#f6f6f6" points="331.3,28.4 341.7,27.2 343.5,32.0 332.8,33.2"/>
<polygon fill="#d5dbfe" points="402.8,26.8 418.7,24.8 442.5,22.8 474.3,16.9 494.2,16.1 514.0,18.9 541.8,20.1 569.6,20.8 597.4,22.8 612.1,27.2 615.6,32.8 609.3,38.7 611.7,52.6 605.3,50.6 599.4,40.7 589.4,38.7 577.5,42.7 581.5,52.6 589.4,60.5 587.8,73.3 581.5,68.5 573.6,58.6 557.7,56.6 541.8,60.5 521.9,58.6 502.1,56.6 482.2,52.6 462.4,50.6 448.5,54.6 442.5,60.5 441.0,74.8 432.6,72.5 428.7,64.5 414.8,56.6 406.8,44.7 404.8,34.7"/>
<polygon fill="#e1e5ff" points="498.1,92.3 502.1,98.3 514.0,106.2 527.9,110.2 539.8,106.2 541.8,112.2 535.8,118.1 529.9,116.1 523.9,128.0 518.0,139.9 514.0,156.6 510.8,154.2 506.1,139.9 500.1,126.0 492.2,118.1 494.2,104.2"/>
<polygon fill="#dfe4ff" points="549.7,167.7 557.7,175.7 569.6,191.6 578.3,197.9 574.3,200.3 563.6,192.3 553.7,180.4"/>
<polygon fill="#dfe4ff" points="579.5,197.1 605.3,200.7 605.3,203.5 579.5,199.9"/>
<polygon fill="#dfe4ff" points="577.5,172.5 589.4,167.7 594.2,179.6 586.3,188.4 577.5,184.4"/>
<polygon fill="#dfe4ff" points="599.4,178.8 603.7,180.4 604.5,192.3 600.1,191.6"/>
<polygon fill="#dfe4ff" points="620.4,183.6 637.1,187.6 637.1,199.5 627.1,192.3"/>
<polygon fill="#e3e7ff" points="353.0,45.7 358.1,41.2 362.6,45.7 364.0,54.6 355.1,56.1"/>
<polygon fill="#3853ff" points="121.9,38.9 128.3,34.8 139.7,26.1 151.6,22.7 172.6,22.3 171.5,26.6 167.8,31.2 162.8,35.5 163.9,44.0 160.7,44.0 158.4,38.7 151.6,38.5 142.9,39.9 133.7,42.1 127.8,44.4 122.8,43.3"/>
<polygon fill="#eef0ff" points="96.7,51.7 110.4,46.3 123.2,41.2 123.7,43.1 110.9,48.1 97.2,52.7"/>
<polygon fill="#3853ff" points="160.7,60.9 185.9,60.0 208.7,60.9 213.7,66.1 216.7,73.7 219.7,67.7 223.6,72.3 229.3,70.7 235.0,67.7 243.0,65.7 251.5,63.9 249.9,68.7 243.0,74.6 234.3,81.0 229.7,87.9 226.5,92.4 220.6,97.0 216.0,101.6 214.9,108.4 213.7,114.4 210.5,113.5 209.4,106.6 207.1,102.9 199.6,103.2 192.7,104.3 186.3,105.7 182.2,112.3 179.0,111.2 176.3,106.1 173.1,102.9 167.1,100.7 158.4,97.5 151.6,94.0 148.1,89.5 146.8,83.3 148.8,74.6 153.4,66.6"/>
<ellipse cx="235.8" cy="40.7" rx="8.0" ry="8.0" fill="#fff" transform="rotate(0 235.8 40.7)"/>
</g></svg>
<div class="abs" style="left:558px;top:488.500px;width:98px;height:32px;background:#f6f6f6;"></div>
<span class="t" style="left:585.57px;top:497.00px;font-size:12.3px;line-height:16px;font-weight:400;color:#4a4a4a;letter-spacing:0.000px;transform:scaleX(0.9565);transform-origin:0 50%;">No Data</span>

<!-- countries -->
<span class="t" style="left:976.94px;top:348.00px;font-size:15.9px;line-height:21px;font-weight:400;color:#273044;letter-spacing:0.287px;-webkit-text-stroke:.62px;">Countries</span>
<span class="t" style="left:977.07px;top:373.00px;font-size:12.4px;line-height:16px;font-weight:400;color:#273044;letter-spacing:0.063px;-webkit-text-stroke:.2px;">Total Number of Visitors: </span>
<span class="t" style="left:1116.37px;top:373.00px;font-size:12.4px;line-height:16px;font-weight:700;color:#273044;letter-spacing:0.000px;">0</span>
<div class="abs" style="left:977.500px;top:389.500px;width:369.800px;height:170.300px;border-radius:4px;background:#fff;box-shadow:0 1px 3px rgba(0,0,0,.16),0 0 1px rgba(0,0,0,.12);"></div>
<div class="abs" style="left:977.500px;top:409.300px;width:369.800px;height:1px;background:#eff0f2;"></div>
<svg class="abs" style="left:1148.500px;top:450px;width:29px;height:30.500px;" viewBox="0 0 29 30.500"><path d="M16 5.100H5A3 3 0 0 0 2 8.100V25.200a3 3 0 0 0 3 3H22.500a3 3 0 0 0 3-3V16" fill="none" stroke="#cbcbcb" stroke-width="1.800"/><path d="M2 18.800H10c.6 2.800 2.200 4 4.200 4s3.600-1.200 4.200-4H25.500" fill="none" stroke="#cbcbcb" stroke-width="1.800"/><circle cx="20.300" cy="7.900" r="8.100" fill="#fff"/><circle cx="20.300" cy="7.900" r="7.500" fill="#c2c2c2"/><path d="m17.200 4.800 6.200 6.200M23.400 4.800l-6.200 6.200" stroke="#fff" stroke-width="1.300" stroke-linecap="round"/></svg>
<span class="t" style="left:1141.08px;top:504.00px;font-size:12.0px;line-height:16px;font-weight:400;color:#c3c3c3;letter-spacing:-0.249px;">No Data</span>

<!-- bottom cards -->
<div class="card" style="left:216px;top:745.500px;width:569.500px;height:80px;"></div>
<span class="t" style="left:237.14px;top:767.00px;font-size:15.9px;line-height:21px;font-weight:400;color:#273044;letter-spacing:0.150px;-webkit-text-stroke:.62px;">Top Client Ip's</span>
<div class="abs" style="left:217.500px;top:788.500px;width:565.500px;height:30px;background:#fff;box-shadow:0 -1px 2px rgba(0,0,0,.07),0 0 1px rgba(0,0,0,.1);"></div>
<span class="t" style="left:228.30px;top:799.00px;font-size:9.8px;line-height:13px;font-weight:400;color:#1f2937;letter-spacing:0.000px;-webkit-text-stroke:.4px;">IP</span>
<span class="t" style="left:555.80px;top:799.00px;font-size:9.8px;line-height:13px;font-weight:400;color:#1f2937;letter-spacing:0.000px;-webkit-text-stroke:.4px;">Requests</span>
<div class="card" style="left:798.800px;top:745.500px;width:569px;height:80px;"></div>
<span class="t" style="left:819.34px;top:767.00px;font-size:15.9px;line-height:21px;font-weight:400;color:#273044;letter-spacing:0.122px;-webkit-text-stroke:.62px;">Top Browsers</span>
<div class="abs" style="left:800px;top:788.500px;width:565.500px;height:30px;background:#fff;box-shadow:0 -1px 2px rgba(0,0,0,.07),0 0 1px rgba(0,0,0,.1);"></div>
<span class="t" style="left:810.00px;top:799.00px;font-size:9.8px;line-height:13px;font-weight:400;color:#1f2937;letter-spacing:0.000px;-webkit-text-stroke:.4px;">Browsers</span>
<span class="t" style="left:1007.20px;top:799.00px;font-size:9.8px;line-height:13px;font-weight:400;color:#1f2937;letter-spacing:0.000px;-webkit-text-stroke:.4px;">Users</span>

<!-- collapse button -->
<div class="abs" style="left:173.600px;top:773.800px;width:16.300px;height:16.300px;border-radius:50%;background:#2fcf8f;"></div>
<svg class="abs" style="left:177.600px;top:777.400px;width:7px;height:9px;fill:none;stroke:#1f2a37;stroke-width:1.500;stroke-linecap:round;stroke-linejoin:round" viewBox="0 0 7 9"><path d="M5 1.200 1.800 4.500 5 7.800"/></svg>

</div>
</body>
</html>
